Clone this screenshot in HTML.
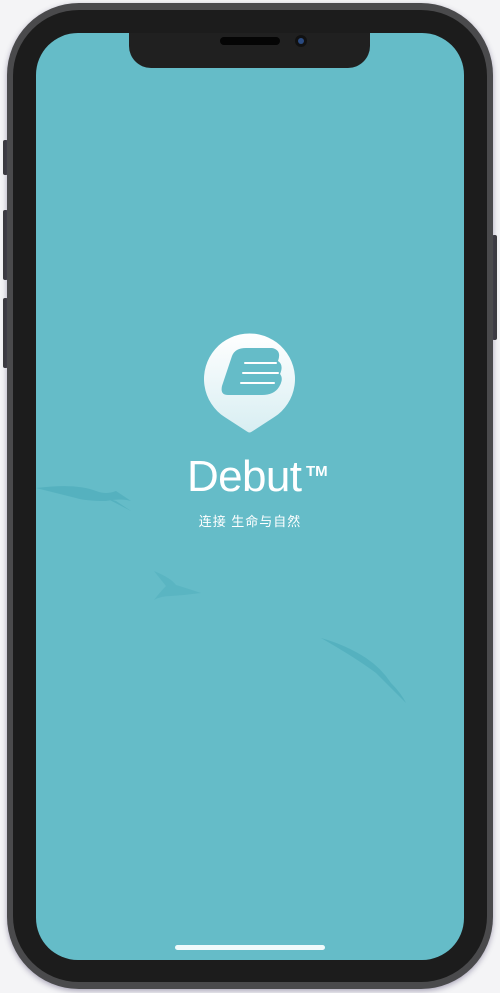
<!DOCTYPE html>
<html><head><meta charset="utf-8"><style>
html,body{margin:0;padding:0;width:500px;height:993px;background:#f4f4f6;overflow:hidden;position:relative;font-family:"Liberation Sans","Noto Sans CJK SC",sans-serif}
.btn{position:absolute;background:#3a3a3c;border-radius:2px}
.frame{position:absolute;left:7px;top:3px;width:486px;height:986px;border-radius:72px;background:#4a4a4c;box-shadow:0 2px 6px rgba(80,70,110,.45)}
.bezel{position:absolute;left:13px;top:10px;width:474px;height:972px;border-radius:66px;background:#1c1c1c}
.screen{position:absolute;left:36px;top:33px;width:428px;height:927px;border-radius:42px;background:#65bcc8;overflow:hidden}
.notch{position:absolute;left:129px;top:33px;width:241px;height:35px;background:#202020;border-radius:0 0 22px 22px}
.spk{position:absolute;left:220px;top:37px;width:60px;height:8px;border-radius:4px;background:#050505}
.cam{position:absolute;left:295px;top:35px;width:12px;height:12px;border-radius:50%;background:#111}
.cam i{position:absolute;left:3px;top:3px;width:6px;height:6px;border-radius:50%;background:#2a4a80}
.home{position:absolute;left:175px;top:945px;width:150px;height:5px;border-radius:3px;background:#f0fafb}
.title{position:absolute;left:187px;top:452px;color:#fff;font-size:44px;letter-spacing:-0.6px;white-space:nowrap}
.tm{position:absolute;left:306px;top:463px;color:#fff;font-size:15px;font-weight:bold;letter-spacing:0}
.sub{position:absolute;left:0;width:500px;top:511px;text-align:center;color:#fff;font-size:13px;letter-spacing:1px}
</style></head><body>
<div class="btn" style="left:3px;top:140px;width:5px;height:35px"></div>
<div class="btn" style="left:3px;top:210px;width:5px;height:70px"></div>
<div class="btn" style="left:3px;top:298px;width:5px;height:70px"></div>
<div class="btn" style="left:492px;top:235px;width:5px;height:105px"></div>
<div class="frame"></div>
<div class="bezel"></div>
<div class="screen">
<svg width="428" height="927" style="position:absolute;left:0;top:0">
<defs><linearGradient id="g" x1="0" y1="0" x2="0" y2="1"><stop offset="0" stop-color="#ffffff"/><stop offset="1" stop-color="#d8eef2"/></linearGradient></defs>
<g opacity=".3" fill="#3098aa">
<path d="M0 455 Q40 450 60 458 Q70 462 80 458 L95 468 Q85 465 70 468 Q50 468 40 465 Z"/>
<path d="M70 465 L95 478 L80 468 Z"/>
<path d="M118 538 Q135 545 140 552 Q150 555 165 560 Q150 562 135 563 Q125 563 118 567 Q125 558 130 553 Z" opacity=".6"/>
<path d="M285 605 Q310 612 330 625 Q345 635 355 650 Q365 660 370 670 Q355 655 340 640 Q320 625 285 605 Z"/>
</g>
<path d="M189 384.3 A45.5 45.5 0 1 1 238 384.3 L216 398.5 Q213.5 400.5 211 398.5 Z" fill="url(#g)"/>
<path d="M196 323 Q199 315 210 315 L236 315 Q246 317 242 328 Q248 332 244 341 Q248 346 243 354 Q238 362 226 362 L192 362 Q184 362 186 353 Z" fill="#65bcc8"/>
<g stroke="#ffffff" stroke-width="2" stroke-linecap="round">
<line x1="209" y1="330" x2="240" y2="330"/>
<line x1="207" y1="340" x2="242" y2="340"/>
<line x1="205" y1="350" x2="238" y2="350"/>
</g>
</svg>
</div>
<div class="notch"></div>
<div class="spk"></div>
<div class="cam"><i></i></div>
<div class="title">Debut</div>
<div class="tm">TM</div>
<div class="sub">连接 生命与自然</div>
<div class="home"></div>
</body></html>
